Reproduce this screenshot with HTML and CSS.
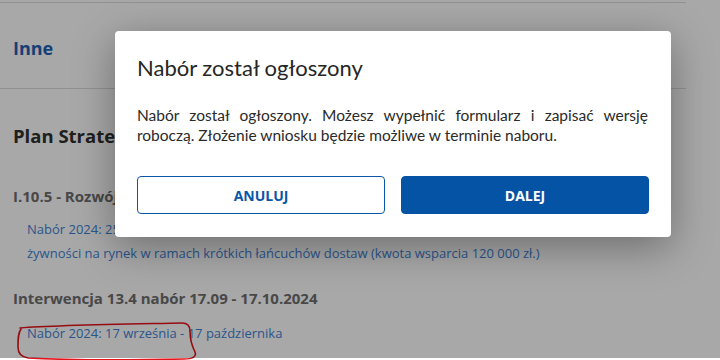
FILE: index.html
```html
<!DOCTYPE html>
<html lang="pl">
<head>
  <meta charset="UTF-8" />
  <title>Nabór</title>
  <link rel="stylesheet" href="styles.css">
</head>
<body>

  <main class="page">
    <section class="block block-top">
      <h2 class="section-title">Inne</h2>
    </section>

    <section class="block">
      <h3 class="plan-title">Plan Strategiczny dla Wspólnej Polityki Rolnej na lata 2023-2027</h3>

      <h4 class="group-title">I.10.5 - Rozwój krótkich łańcuchów dostaw</h4>
      <a class="call-link" href="#">Nabór 2024: 25 września - 25 października - Rozwój współpracy w zakresie wprowadzania produktów<br>żywności na rynek w ramach krótkich łańcuchów dostaw (kwota wsparcia 120 000 zł.)</a>

      <h4 class="group-title group-next">Interwencja 13.4 nabór 17.09 - 17.10.2024</h4>
      <a class="call-link call-last" href="#">Nabór 2024: 17 września - 17 października</a>
    </section>
  </main>

  <!-- hand-drawn mark from the screenshot -->
  <svg class="scribble" width="190" height="42" viewBox="0 0 190 42">
    <path d="M4 7 C 40 4, 120 3, 166 2 C 172 2, 174 5, 174 10 C 174 17, 176 25, 179 31 C 181 36, 176 38, 168 38 C 120 39, 50 39, 12 37 C 5 36, 2 32, 2 26 C 2 18, 2 12, 5 8" fill="none" stroke="#e3141b" stroke-width="1.6" stroke-linecap="round"/>
  </svg>

  <div class="overlay">
    <div class="modal">
      <h3 class="modal-title">Nabór został ogłoszony</h3>
      <p class="modal-text">Nabór został ogłoszony. Możesz wypełnić formularz i zapisać wersję roboczą. Złożenie wniosku będzie możliwe w terminie naboru.</p>
      <div class="modal-actions">
        <button class="btn btn-outline">Anuluj</button>
        <button class="btn btn-primary">Dalej</button>
      </div>
    </div>
  </div>

</body>
</html>
```

FILE: styles.css
```css
/* Base */
* {
  margin: 0; padding: 0; box-sizing: border-box;
}
body {
  font-family: 'Open Sans', 'Noto Sans', sans-serif;
  background: #fff;
  color: #222;
  width: 720px;
  height: 360px;
  overflow: hidden;
  position: relative;
}

/* Page under the dialog */
.page {
  width: 686px;
  border-top: 1px solid #dcdcdc;
  margin-top: 2px;
}
.block {
  padding: 0 13px;
}
.block-top {
  height: 86px;
  border-bottom: 1px solid #dcdcdc;
  padding-top: 32px;
}
.section-title {
  font-size: 18px;
  font-weight: 700;
  color: #1f62b5;
  line-height: 26px;
}
.plan-title {
  font-size: 18.5px;
  font-weight: 700;
  color: #303030;
  line-height: 26px;
  margin-top: 34px;
  white-space: nowrap;
}
.group-title {
  font-size: 15px;
  font-weight: 700;
  color: #6e6e6e;
  line-height: 22px;
  margin-top: 36px;
}
.group-next {
  margin-top: 22px;
}
.call-link {
  display: block;
  color: #3f83d6;
  text-decoration: none;
  font-size: 13px;
  line-height: 24px;
  padding-left: 14px;
  margin-top: 10px;
  white-space: nowrap;
}
.call-last {
  margin-top: 12px;
}

.scribble {
  position: absolute;
  left: 16px;
  top: 321px;
}

/* Dialog */
.overlay {
  position: absolute;
  left: 0; top: 0;
  width: 720px;
  height: 358px;
  background: rgba(0, 0, 0, 0.34);
}
.modal {
  width: 556px;
  margin: 31px 0 0 115px;
  background: #fff;
  border-radius: 4px;
  padding: 21px 22px 23px;
  box-shadow: 0 10px 40px rgba(0, 0, 0, 0.35);
  font-family: Lato, 'Open Sans', sans-serif;
}
.modal-title {
  font-size: 22px;
  font-weight: 400;
  color: #262626;
  line-height: 32px;
}
.modal-text {
  font-size: 15.5px;
  line-height: 20px;
  color: #2a2a2a;
  text-align: justify;
  margin-top: 21px;
  padding-right: 1px;
}
.modal-actions {
  display: flex;
  gap: 16px;
  margin-top: 31px;
}
.btn {
  flex: 1;
  height: 38px;
  border-radius: 4px;
  font-family: 'Open Sans', sans-serif;
  font-size: 14px;
  font-weight: 700;
  text-transform: uppercase;
  cursor: pointer;
}
.btn-outline {
  background: #fff;
  border: 1px solid #0a56a8;
  color: #0a56a8;
}
.btn-primary {
  background: #0553a4;
  border: 1px solid #0553a4;
  color: #fff;
}
```
